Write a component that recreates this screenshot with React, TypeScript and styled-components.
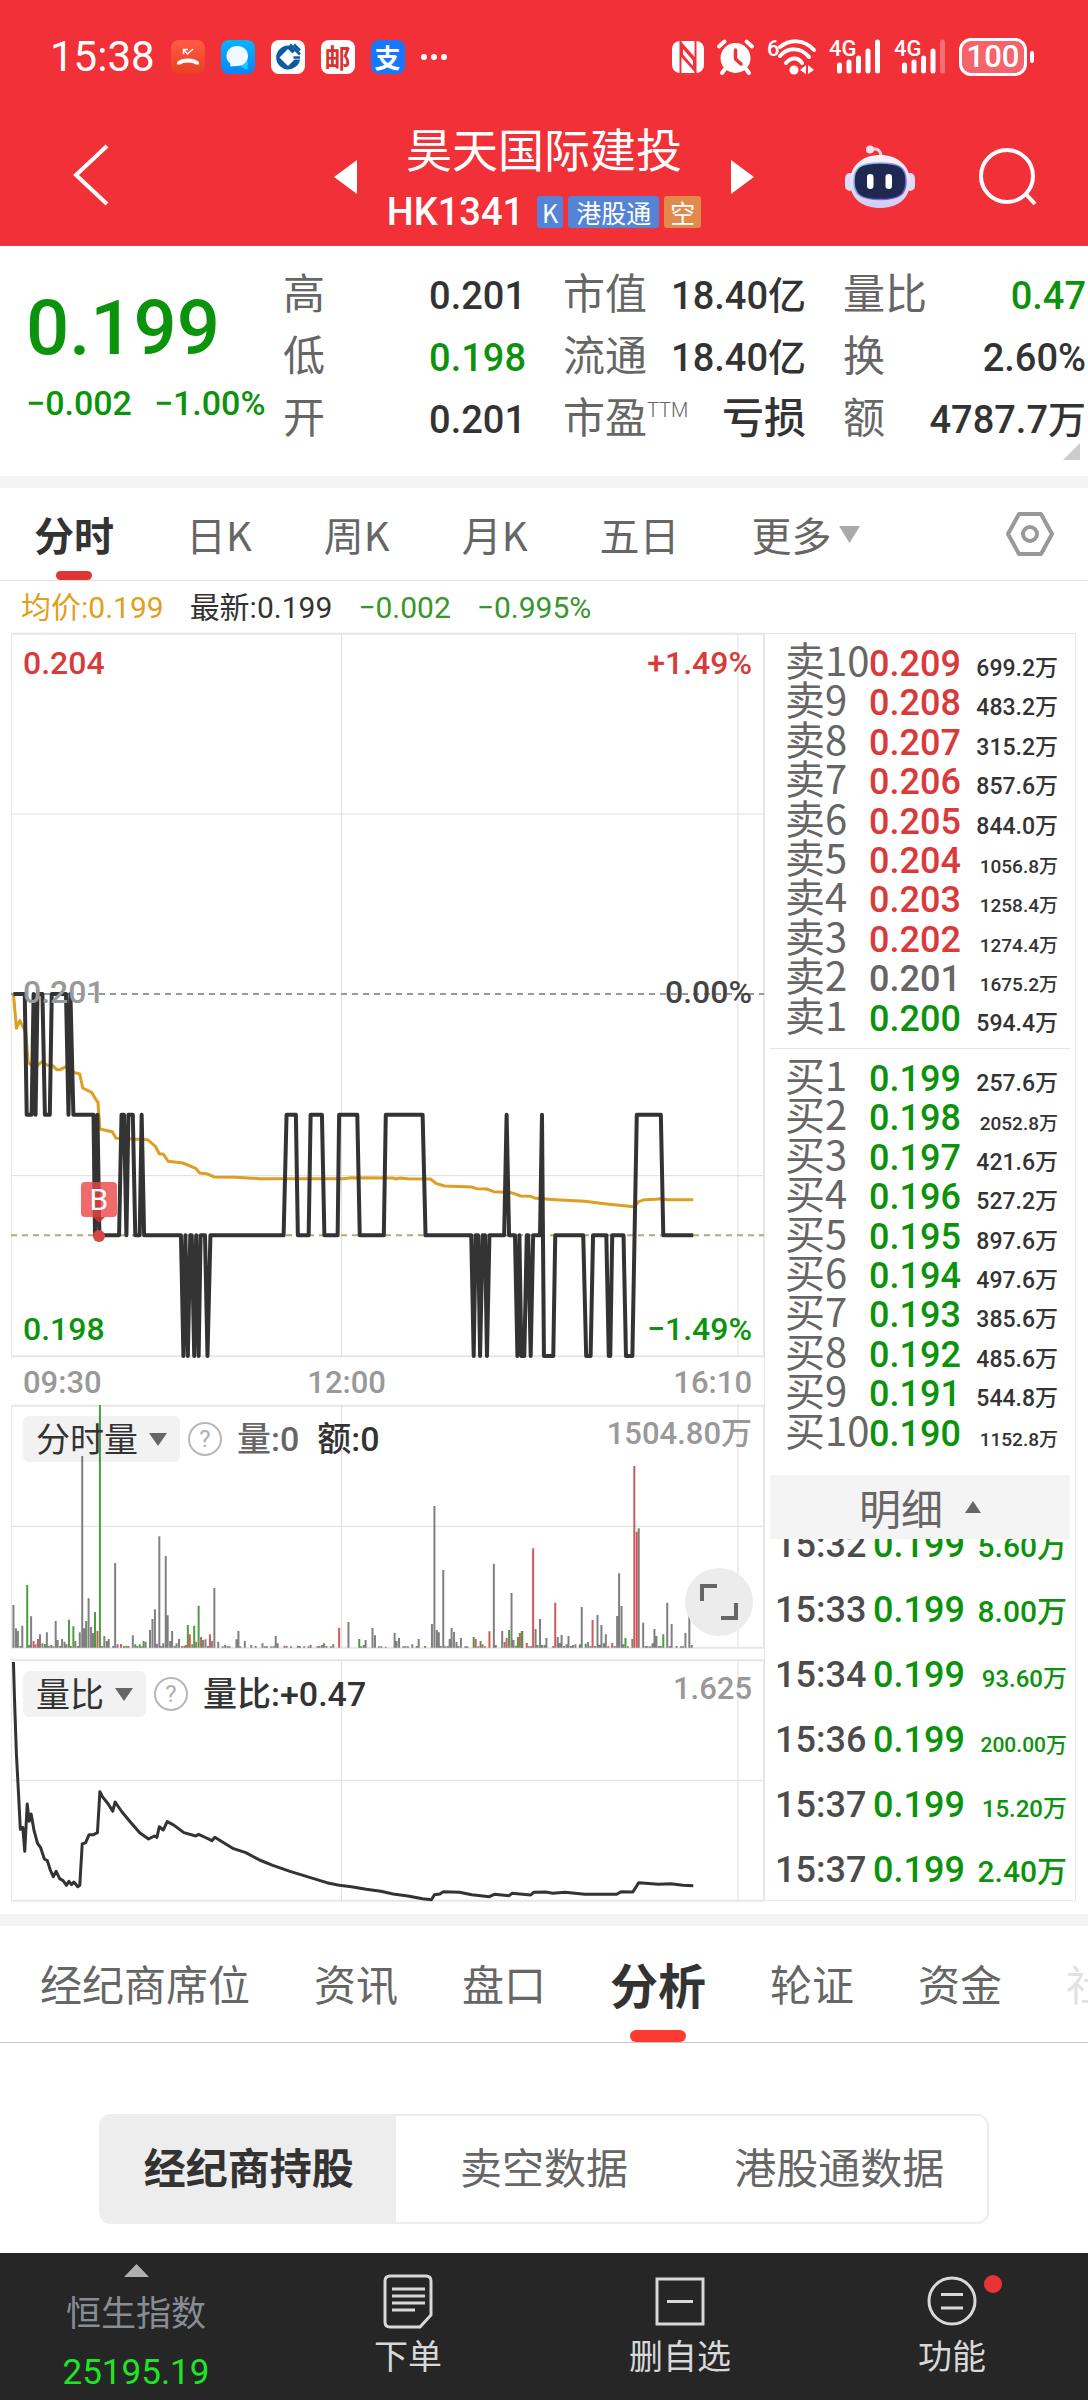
import React from "react";
import styled, { createGlobalStyle } from "styled-components";

const RED = "#d93a3a";
const GREEN = "#0c930c";
const INK = "#333333";
const GREY = "#666666";
const MUTED = "#999999";
const NUM = `Roboto, "Noto Sans CJK SC", sans-serif`;
const CJK = `"Noto Sans CJK SC", sans-serif`;

const GlobalStyle = createGlobalStyle`
  *, *::before, *::after { box-sizing: border-box; }
  body { margin: 0; background: #ffffff; font-family: ${CJK}; color: ${INK}; }
  button, select { font: inherit; color: inherit; background: none; border: 0; padding: 0; margin: 0; cursor: pointer; }
  svg { display: block; overflow: visible; }
  table { border-spacing: 0; }
  td, th { padding: 0; font-weight: inherit; text-align: left; }
`;

const Page = styled.div`
  display: flex;
  flex-direction: column;
  overflow: hidden;
`;

/* ---------- top bar ---------- */

const Top = styled.header`
  background: #f13038;
  color: #ffffff;
  border-bottom: 1px solid #d0484c;
`;

const StatusBar = styled.div`
  display: flex;
  justify-content: space-between;
  align-items: center;
  height: 112px;
  padding: 2px 54px 0 50px;
`;

const StatusGroup = styled.div<{ $gap: number }>`
  display: flex;
  align-items: center;
  gap: ${(p) => p.$gap}px;
`;

const Clock = styled.time`
  font: 400 42px/48px ${NUM};
`;

const AppIcon = styled.span<{ $bg: string; $fg?: string }>`
  display: flex;
  align-items: center;
  justify-content: center;
  width: 34px;
  height: 34px;
  border-radius: 8px;
  background: ${(p) => p.$bg};
  color: ${(p) => p.$fg || "#ffffff"};
  font: 700 26px/34px ${CJK};
`;

const Battery = styled.span`
  display: flex;
  align-items: center;
  gap: 3px;
  &::after {
    content: "";
    width: 4px;
    height: 12px;
    border-radius: 2px;
    background: #ffffff;
  }
`;

const BatteryBody = styled.span`
  display: flex;
  align-items: center;
  justify-content: center;
  width: 68px;
  height: 38px;
  border: 3px solid #ffffff;
  border-radius: 12px;
  background: rgba(255, 255, 255, 0.25);
  font: 500 31px/32px ${NUM};
`;

const TitleBar = styled.div`
  display: grid;
  grid-template-columns: 1fr auto 1fr;
  align-items: center;
  padding: 10px 0 13px;
`;

const TitleLeft = styled.div`
  padding-left: 73px;
`;

const TitleRight = styled.div`
  display: flex;
  align-items: center;
  justify-content: flex-end;
  gap: 64px;
  padding-right: 51px;
`;

const TitleNav = styled.div`
  display: flex;
  align-items: center;
  gap: 30px;
`;

const TitleText = styled.div`
  display: flex;
  flex-direction: column;
  align-items: center;
  gap: 20px;
`;

const StockName = styled.h1`
  margin: 0;
  font: 400 46px/50px ${CJK};
`;

const StockCode = styled.div`
  display: flex;
  align-items: center;
  gap: 5px;
  font: 500 38px/40px ${NUM};
`;

const CodeText = styled.span`
  margin-right: 8px;
`;

const Tag = styled.span<{ $bg: string; $pad: number }>`
  height: 32px;
  padding: 0 ${(p) => p.$pad}px;
  border-radius: 3px;
  background: ${(p) => p.$bg};
  font: 400 25px/32px ${CJK};
`;

/* ---------- quote ---------- */

const Quote = styled.section`
  display: grid;
  grid-template-columns: 257px 1fr;
  position: relative;
  padding: 17px 2px 27px 26px;
`;

const PriceBlock = styled.div`
  display: flex;
  flex-direction: column;
  color: ${GREEN};
  padding-top: 20px;
`;

const Price = styled.strong`
  font: 500 76px/90px ${NUM};
`;

const Change = styled.div`
  display: flex;
  gap: 22px;
  margin-top: 8px;
  white-space: nowrap;
  font: 500 34px/44px ${NUM};
`;

const Stats = styled.dl`
  display: grid;
  grid-template-columns: repeat(3, 1fr);
  column-gap: 37px;
  margin: 0;
`;

const Stat = styled.div`
  display: flex;
  justify-content: space-between;
  align-items: baseline;
  height: 62px;
  white-space: nowrap;
`;

const StatName = styled.dt`
  font: 400 42px/56px ${CJK};
  color: ${GREY};
`;

const Sup = styled.sup`
  font: 300 20px/20px ${NUM};
  vertical-align: 16px;
`;

const StatValue = styled.dd<{ $down?: boolean; $large?: boolean }>`
  margin: 0;
  font: 500 ${(p) => (p.$large ? 42 : 38)}px/56px ${NUM};
  color: ${(p) => (p.$down ? GREEN : INK)};
`;

const Corner = styled.span`
  position: absolute;
  right: 8px;
  bottom: 16px;
  border-left: 17px solid transparent;
  border-bottom: 17px solid #cccccc;
`;

const Band = styled.div`
  height: 12px;
  background: #f4f4f4;
`;

/* ---------- period tabs ---------- */

const PeriodTabs = styled.nav`
  display: flex;
  align-items: center;
  gap: 72px;
  height: 93px;
  padding: 0 34px;
  border-bottom: 1px solid #e4e4e4;
`;

const PeriodTab = styled.button<{ $on?: boolean }>`
  display: flex;
  align-items: center;
  gap: 7px;
  position: relative;
  height: 92px;
  font: ${(p) => (p.$on ? 700 : 400)} 40px/92px ${CJK};
  color: ${(p) => (p.$on ? INK : GREY)};
  white-space: nowrap;
  ${(p) =>
    p.$on &&
    `&::after {
      content: "";
      position: absolute;
      left: 50%;
      bottom: 0;
      width: 36px;
      height: 9px;
      margin-left: -18px;
      border-radius: 5px;
      background: #e33434;
    }`}
`;

const SettingsButton = styled.button`
  margin-left: auto;
`;

const Legend = styled.div`
  display: flex;
  align-items: center;
  gap: 26px;
  height: 52px;
  padding: 2px 0 0 21px;
  font: 400 30px/50px ${NUM};
`;

const LegendItem = styled.span<{ $color: string }>`
  color: ${(p) => p.$color};
`;

/* ---------- charts ---------- */

const Market = styled.section`
  display: grid;
  grid-template-columns: 1fr 312px;
  padding: 0 12px 13px 11px;
`;

const Charts = styled.div`
  display: flex;
  flex-direction: column;
`;

const Panel = styled.div<{ $h: number }>`
  position: relative;
  height: ${(p) => p.$h}px;
  & > svg {
    width: 100%;
    height: 100%;
  }
  & > svg * {
    vector-effect: non-scaling-stroke;
  }
`;

const AxisLabel = styled.span<{ $side: "left" | "right"; $top: number; $color: string }>`
  position: absolute;
  ${(p) => p.$side}: 12px;
  top: ${(p) => p.$top}px;
  font: 500 32px/40px ${NUM};
  color: ${(p) => p.$color};
`;

const TimeAxis = styled.div`
  display: grid;
  grid-template-columns: 39% 1fr auto;
  height: 48px;
  padding: 0 12px;
  font: 500 31px/52px ${NUM};
  color: ${MUTED};
`;

const PanelHead = styled.div`
  position: absolute;
  left: 12px;
  right: 12px;
  top: 11px;
  display: flex;
  align-items: center;
  height: 46px;
  font: 400 34px/46px ${NUM};
`;

const Picker = styled.label`
  display: flex;
  align-items: center;
  position: relative;
  & > svg {
    position: absolute;
    right: 13px;
    pointer-events: none;
  }
`;

const PickerSelect = styled.select`
  appearance: none;
  height: 46px;
  padding: 0 42px 2px 13px;
  border-radius: 6px;
  background: rgba(0, 0, 0, 0.05);
  font: 400 34px/44px ${CJK};
`;

const HelpButton = styled.button`
  width: 34px;
  height: 34px;
  margin: 0 15px 0 8px;
  border: 2px solid #b8b8b8;
  border-radius: 50%;
  color: #b0b0b0;
  font: 400 24px/30px ${NUM};
`;

const Reading = styled.span<{ $color: string }>`
  margin-right: 18px;
  font-weight: 500;
  color: ${(p) => p.$color};
`;

const ScaleMax = styled.span`
  margin-left: auto;
  font: 500 31px/36px ${NUM};
  align-self: flex-start;
  color: ${MUTED};
`;

const BuyMark = styled.span`
  position: absolute;
  left: 9%;
  top: 549px;
  width: 36px;
  height: 35px;
  margin-left: 2px;
  border-radius: 4px;
  background: rgba(235, 70, 70, 0.8);
  color: #ffffff;
  font: 400 30px/35px ${NUM};
  text-align: center;
  &::before {
    content: "";
    position: absolute;
    left: 12px;
    top: 35px;
    border: 6px solid transparent;
    border-top-color: rgba(200, 50, 50, 0.9);
    border-bottom: 0;
  }
  &::after {
    content: "";
    position: absolute;
    left: 12px;
    top: 48px;
    width: 12px;
    height: 12px;
    border-radius: 50%;
    background: #d94444;
  }
`;

const ExpandButton = styled.button`
  position: absolute;
  right: 11px;
  bottom: 12px;
  display: flex;
  align-items: center;
  justify-content: center;
  width: 68px;
  height: 68px;
  border-radius: 50%;
  background: #ececec;
`;

const Spacer = styled.div`
  height: 12px;
`;

/* ---------- order book ---------- */

const Book = styled.aside`
  display: flex;
  flex-direction: column;
  border: 1px solid #e6e6e6;
  padding: 0 5px;
`;

const Depth = styled.table`
  display: block;
  height: 414px;
  padding: 6px 12px 14px 15px;
`;

const DepthBody = styled.tbody`
  display: grid;
  grid-template-rows: repeat(10, minmax(0, 1fr));
  height: 394px;
`;

const DepthRow = styled.tr`
  display: grid;
  grid-template-columns: 84px 92px 1fr;
  align-items: baseline;
  line-height: 39px;
  white-space: nowrap;
`;

const DepthName = styled.th`
  font: 400 40px/39px ${CJK};
  color: ${GREY};
`;

const PriceCell = styled.td<{ $color: string }>`
  font-family: ${NUM};
  font-size: 36px;
  font-weight: 500;
  color: ${(p) => p.$color};
`;

const AmountCell = styled.td<{ $size: number; $color: string }>`
  && {
    text-align: right;
  }
  font-family: ${NUM};
  font-size: ${(p) => p.$size}px;
  font-weight: 500;
  color: ${(p) => p.$color};
`;

const Divider = styled.hr`
  width: 100%;
  height: 1px;
  margin: 0;
  border: 0;
  background: #e4e4e4;
`;

const DetailButton = styled.button`
  display: flex;
  align-items: center;
  justify-content: center;
  gap: 22px;
  height: 64px;
  margin-top: 12px;
  background: #f4f4f4;
  font: 400 42px/64px ${CJK};
  color: ${GREY};
`;

const Trades = styled.div`
  display: flex;
  flex-direction: column;
  justify-content: flex-end;
  height: 361px;
  padding: 0 3px 0 5px;
  overflow: hidden;
`;

const TradeRow = styled.tr`
  display: grid;
  grid-template-columns: 98px 92px 1fr;
  align-items: baseline;
  height: 65px;
  padding-top: 6px;
  line-height: 59px;
  white-space: nowrap;
`;

const TradeTime = styled.td`
  font-family: ${NUM};
  font-size: 36px;
  font-weight: 500;
  color: #4c4c4c;
`;

const TradeTable = styled.table`
  display: block;
  & > tbody {
    display: block;
  }
`;

/* ---------- info tabs ---------- */

const InfoTabs = styled.nav`
  display: flex;
  align-items: center;
  gap: 64px;
  height: 117px;
  padding-left: 40px;
  border-bottom: 1px solid #c6c6c6;
  overflow: hidden;
`;

const InfoTab = styled.button<{ $on?: boolean; $faded?: boolean }>`
  position: relative;
  flex: none;
  height: 116px;
  padding-bottom: 2px;
  font: ${(p) => (p.$on ? "700 48px" : "400 42px")}/114px ${CJK};
  color: ${(p) => (p.$on ? INK : p.$faded ? "#e2e2e2" : GREY)};
  ${(p) =>
    p.$on &&
    `&::after {
      content: "";
      position: absolute;
      left: 50%;
      bottom: 0;
      width: 56px;
      height: 12px;
      margin-left: -28px;
      border-radius: 6px;
      background: #fc3a30;
    }`}
`;

const Analysis = styled.section`
  padding: 71px 99px 29px;
`;

const Segments = styled.div`
  display: grid;
  grid-template-columns: repeat(3, 1fr);
  border: 2px solid #ededed;
  border-radius: 12px;
  overflow: hidden;
`;

const Segment = styled.button<{ $on?: boolean }>`
  height: 106px;
  padding-bottom: 6px;
  background: ${(p) => (p.$on ? "#ededed" : "#ffffff")};
  font: ${(p) => (p.$on ? 700 : 400)} 42px/100px ${CJK};
  color: ${(p) => (p.$on ? INK : GREY)};
`;

/* ---------- bottom bar ---------- */

const BottomBar = styled.footer`
  display: grid;
  grid-template-columns: repeat(4, 1fr);
  height: 147px;
  background: #262626;
  color: #d8d8d8;
`;

const IndexButton = styled.button`
  display: flex;
  flex-direction: column;
  align-items: center;
  padding-top: 11px;
`;

const IndexName = styled.span`
  margin-top: 9px;
  font: 400 35px/50px ${CJK};
  color: #878d93;
`;

const IndexValue = styled.span`
  margin-top: 15px;
  font: 400 35px/44px ${NUM};
  color: #1fe526;
`;

const BarButton = styled.button`
  display: flex;
  flex-direction: column;
  align-items: center;
  gap: 3px;
  padding-top: 20px;
  font: 400 34px/46px ${CJK};
`;

const IconSlot = styled.span`
  position: relative;
  display: flex;
`;

const Dot = styled.span`
  position: absolute;
  right: -25px;
  top: 2px;
  width: 18px;
  height: 18px;
  border-radius: 50%;
  background: #ea3434;
`;

/* ---------- data ---------- */

type Pt = [number, number];

// [x, price step below 0.201]
const priceSteps: Pt[] = [
  [27, 0], [50, 0], [54, 1], [64, 1], [68, 0], [72, 1], [76, 0], [86, 0], [91, 1], [101, 1], [105, 0], [134, 0],
  [139, 1], [143, 0], [149, 1], [190, 1], [193, 2], [198, 1], [202, 2], [242, 2], [247, 1], [252, 1], [257, 2],
  [261, 1], [270, 1], [275, 2], [284, 2], [288, 1], [293, 2], [368, 2], [373, 3], [377, 2], [382, 3], [387, 2],
  [390, 2], [395, 3], [399, 2], [404, 3], [408, 2], [417, 2], [422, 3], [428, 2], [577, 2], [583, 1], [602, 1],
  [606, 2], [628, 2], [632, 1], [655, 1], [660, 2], [687, 2], [690, 1], [727, 1], [732, 2], [781, 2], [785, 1],
  [860, 1], [866, 2], [959, 2], [964, 3], [968, 2], [973, 2], [977, 3], [982, 2], [987, 2], [991, 3], [996, 2],
  [1026, 2], [1031, 1], [1036, 2], [1048, 2], [1053, 3], [1057, 2], [1061, 3], [1067, 3], [1072, 2], [1075, 2],
  [1080, 3], [1085, 2], [1099, 2], [1103, 1], [1107, 3], [1126, 3], [1130, 2], [1187, 2], [1193, 3], [1202, 3],
  [1207, 2], [1234, 2], [1239, 3], [1242, 3], [1246, 2], [1269, 2], [1274, 3], [1287, 3], [1296, 1], [1345, 1],
  [1350, 2], [1411, 2],
];

const average: Pt[] = [
  [27, 45], [33, 148], [40, 125], [48, 148], [52, 160], [57, 250], [66, 262], [74, 262], [85, 248], [95, 258],
  [107, 260], [115, 272], [122, 272], [135, 262], [150, 280], [162, 285], [168, 327], [186, 340], [192, 355],
  [199, 370], [203, 450], [228, 458], [236, 478], [300, 482], [316, 502], [324, 525], [332, 525], [342, 547],
  [372, 552], [398, 568], [406, 582], [420, 584], [436, 594], [480, 595], [530, 599], [700, 599], [715, 596],
  [800, 597], [805, 600], [815, 597], [830, 599], [876, 600], [888, 614], [905, 621], [960, 624], [970, 629],
  [990, 630], [1005, 638], [1040, 641], [1060, 651], [1080, 652], [1090, 658], [1130, 662], [1190, 667],
  [1230, 674], [1270, 680], [1290, 683], [1300, 668], [1312, 662], [1335, 661], [1345, 659], [1360, 662],
  [1411, 662],
];

const ratio: Pt[] = [
  [27, 814], [29, 920], [33, 1090], [37, 1200], [41, 1316], [46, 1310], [50, 1382], [55, 1240], [59, 1292],
  [63, 1270], [69, 1320], [76, 1358], [82, 1370], [90, 1405], [96, 1410], [102, 1438], [108, 1458], [114, 1442],
  [121, 1464], [128, 1470], [135, 1484], [140, 1472], [145, 1482], [150, 1474], [158, 1488], [162, 1484],
  [167, 1360], [174, 1356], [181, 1332], [190, 1332], [198, 1326], [203, 1203], [208, 1218], [220, 1240],
  [229, 1262], [234, 1234], [248, 1264], [265, 1294], [284, 1326], [302, 1345], [314, 1336], [319, 1340],
  [324, 1308], [332, 1318], [340, 1293], [352, 1302], [374, 1326], [398, 1336], [404, 1331], [420, 1342],
  [431, 1350], [437, 1340], [455, 1356], [475, 1374], [500, 1386], [528, 1408], [555, 1424], [590, 1442],
  [630, 1460], [665, 1476], [690, 1484], [715, 1488], [745, 1496], [775, 1502], [800, 1510], [830, 1516],
  [860, 1524], [878, 1527], [884, 1512], [895, 1510], [902, 1503], [935, 1505], [960, 1512], [996, 1518],
  [1006, 1511], [1036, 1515], [1042, 1508], [1080, 1513], [1086, 1505], [1110, 1504], [1125, 1508], [1150, 1505],
  [1190, 1511], [1255, 1511], [1264, 1503], [1288, 1504], [1300, 1476], [1340, 1481], [1365, 1479], [1390, 1484],
  [1411, 1485],
];

const flatBars: Pt[] = [
  [27, 642], [32, 712], [36, 720], [41, 765], [45, 704], [59, 762], [63, 676], [72, 760], [81, 730], [86, 757],
  [95, 724], [99, 765], [108, 766], [113, 690], [117, 747], [122, 765], [126, 744], [131, 752], [135, 760],
  [153, 750], [158, 765], [162, 724], [167, 195], [171, 712], [175, 690], [180, 622], [185, 708], [189, 726],
  [207, 765], [212, 735], [217, 750], [221, 744], [230, 765], [234, 516], [239, 760], [252, 765], [270, 733],
  [279, 765], [284, 760], [288, 766], [296, 752], [305, 717], [310, 684], [315, 655], [319, 758], [324, 436],
  [328, 765], [332, 757], [337, 495], [341, 673], [346, 750], [350, 720], [355, 765], [359, 757], [364, 744],
  [370, 765], [375, 765], [391, 760], [399, 752], [413, 747], [418, 745], [423, 765], [431, 750], [436, 591],
  [444, 752], [453, 766], [458, 762], [463, 766], [467, 766], [481, 745], [485, 720], [489, 766], [498, 750],
  [511, 762], [520, 765], [534, 757], [539, 766], [543, 766], [552, 766], [557, 766], [561, 735], [565, 757],
  [579, 764], [592, 766], [610, 765], [619, 766], [628, 766], [646, 766], [650, 765], [655, 762], [664, 765],
  [673, 766], [678, 760], [709, 693], [735, 766], [740, 762], [744, 747], [758, 711], [763, 733], [771, 766],
  [776, 766], [803, 725], [807, 750], [812, 741], [821, 766], [825, 766], [830, 766], [839, 760], [848, 765],
  [852, 744], [879, 699], [884, 345], [889, 717], [893, 724], [897, 765], [902, 537], [906, 766], [911, 766],
  [915, 744], [919, 711], [924, 723], [929, 753], [933, 766], [938, 741], [947, 766], [951, 766], [973, 766],
  [987, 766], [1005, 518], [1009, 762], [1022, 720], [1027, 753], [1041, 606], [1045, 747], [1050, 764],
  [1063, 720], [1076, 766], [1081, 765], [1090, 714], [1094, 762], [1099, 684], [1108, 762], [1112, 741],
  [1126, 765], [1135, 738], [1139, 756], [1143, 732], [1148, 765], [1153, 760], [1157, 735], [1162, 765],
  [1166, 762], [1171, 760], [1180, 760], [1184, 648], [1197, 753], [1202, 765], [1211, 765], [1216, 672],
  [1220, 762], [1224, 702], [1229, 757], [1233, 730], [1238, 765], [1251, 765], [1256, 675], [1260, 547],
  [1265, 645], [1269, 760], [1278, 766], [1287, 744], [1300, 412], [1309, 695], [1314, 765], [1318, 766],
  [1323, 766], [1328, 757], [1332, 714], [1336, 735], [1341, 765], [1345, 765], [1358, 635], [1363, 765],
  [1367, 699], [1377, 765], [1386, 766], [1390, 766], [1395, 726], [1403, 672], [1408, 762],
];
const downBars: Pt[] = [
  [55, 582], [91, 759], [140, 686], [149, 706], [193, 663], [203, 42], [257, 764], [275, 760], [292, 750],
  [382, 702], [395, 704], [404, 644], [606, 764], [659, 757], [731, 744], [865, 765], [964, 738], [978, 750],
  [1036, 717], [1054, 738], [1062, 720], [1103, 762], [1192, 758], [1273, 741], [1350, 730],
];
const upBars: Pt[] = [
  [68, 750], [77, 744], [104, 762], [144, 765], [198, 720], [246, 759], [261, 765], [378, 762], [386, 730],
  [409, 738], [427, 730], [583, 765], [632, 762], [690, 710], [785, 767], [968, 744], [982, 760], [996, 721],
  [1031, 741], [1058, 726], [1072, 756], [1085, 472], [1130, 635], [1206, 687], [1246, 756], [1291, 225],
  [1296, 422],
];

const FLAT = 1083;
const STEP = 362;
const AVERAGE_TOP = 1038;
const VOLUME_BASE = 770;

const points = (list: Pt[]) => list.map((p) => p.join(",")).join(" ");
const barPath = (list: Pt[]) => list.map(([x, y]) => `M${x} ${VOLUME_BASE}V${y}`).join("");

const stats: { name: string; sup?: string; value: string; down?: boolean; large?: boolean }[] = [
  { name: "高", value: "0.201" },
  { name: "市值", value: "18.40亿" },
  { name: "量比", value: "0.47", down: true },
  { name: "低", value: "0.198", down: true },
  { name: "流通", value: "18.40亿" },
  { name: "换", value: "2.60%" },
  { name: "开", value: "0.201" },
  { name: "市盈", sup: "TTM", value: "亏损", large: true },
  { name: "额", value: "4787.7万" },
];

type Level = [string, string, string];
const asks: Level[] = [
  ["卖10", "0.209", "699.2万"], ["卖9", "0.208", "483.2万"], ["卖8", "0.207", "315.2万"],
  ["卖7", "0.206", "857.6万"], ["卖6", "0.205", "844.0万"], ["卖5", "0.204", "1056.8万"],
  ["卖4", "0.203", "1258.4万"], ["卖3", "0.202", "1274.4万"], ["卖2", "0.201", "1675.2万"],
  ["卖1", "0.200", "594.4万"],
];
const bids: Level[] = [
  ["买1", "0.199", "257.6万"], ["买2", "0.198", "2052.8万"], ["买3", "0.197", "421.6万"],
  ["买4", "0.196", "527.2万"], ["买5", "0.195", "897.6万"], ["买6", "0.194", "497.6万"],
  ["买7", "0.193", "385.6万"], ["买8", "0.192", "485.6万"], ["买9", "0.191", "544.8万"],
  ["买10", "0.190", "1152.8万"],
];
const trades: Level[] = [
  ["15:32", "0.199", "5.60万"], ["15:33", "0.199", "8.00万"], ["15:34", "0.199", "93.60万"],
  ["15:36", "0.199", "200.00万"], ["15:37", "0.199", "15.20万"], ["15:37", "0.199", "2.40万"],
];

const PREV_CLOSE = 0.201;
const levelColor = (price: string) => {
  const v = Number(price);
  return v > PREV_CLOSE ? RED : v < PREV_CLOSE ? GREEN : GREY;
};
const tradeSize = (amount: string) => (amount.length > 6 ? 21 : amount.length > 5 ? 24 : 30);

/* ---------- icons ---------- */

const Triangle = ({ w, h, d, fill }: { w: number; h: number; d: "up" | "down" | "left" | "right"; fill: string }) => {
  const shape = {
    up: `0,${h} ${w},${h} ${w / 2},0`,
    down: `0,0 ${w},0 ${w / 2},${h}`,
    left: `${w},0 ${w},${h} 0,${h / 2}`,
    right: `0,0 0,${h} ${w},${h / 2}`,
  }[d];
  return (
    <svg width={w} height={h} aria-hidden="true">
      <polygon points={shape} fill={fill} />
    </svg>
  );
};

const MissedCall = () => (
  <svg width="34" height="34" viewBox="0 0 34 34" fill="none" stroke="#fff">
    <path d="M12.500 14V9.500H17M12.500 9.500L16.500 14L22 9" strokeWidth="1.500" />
    <path d="M8 24.500V23C12 19.500 22 19.500 26 23V24.500" strokeWidth="4" strokeLinejoin="round" />
  </svg>
);

const Chat = () => (
  <svg width="34" height="34" viewBox="0 0 34 34">
    <path d="M24 20C28 21 28 25 26 26L27 29C22 29 19 27 20 23Z" fill="#17c8ff" />
    <path d="M16 6C23 6 27 10.500 27 16C27 21.500 23 26 16 26L9.500 26.500L9 23C6.500 21.500 5.500 19 5.500 16C5.500 10.500 9.500 6 16 6Z" fill="#eefaff" />
  </svg>
);

const Bank = () => (
  <svg width="34" height="34" viewBox="0 0 34 34">
    <path d="M17 5.500A12 12 0 1 0 29 19.500H23.500L17 26L8.500 17.500L17 9L21.500 13.500L24 11L19 6Z" fill="#0a5aa6" />
    <path d="M17 11.500L23 17.500L17 23.500L11 17.500Z" fill="#ffffff" />
    <path d="M19 4.500L29 14.500M23 4.500L29 10.500M22.500 17.500H29" stroke="#0a5aa6" strokeWidth="2.500" fill="none" />
  </svg>
);

const More = () => (
  <svg width="26" height="8" fill="#fff">
    <circle cx="3" cy="4" r="3" />
    <circle cx="13" cy="4" r="3" />
    <circle cx="23" cy="4" r="3" />
  </svg>
);

const Nfc = () => (
  <svg width="32" height="34" viewBox="0 0 32 34">
    <rect x="0" y="1" width="32" height="32" rx="8" fill="#fff" />
    <path d="M8.500 1V33M23.500 1V33" stroke="#f13038" strokeWidth="2" />
    <path d="M8.500 1L23.500 18V33L8.500 16Z" fill="#f13038" />
    <path d="M11 9L21 20.500V26L11 14.500Z" fill="#fff" />
  </svg>
);

const Alarm = () => (
  <svg width="37" height="36" viewBox="0 0 37 36" stroke="#fff" strokeLinecap="round">
    <circle cx="18.500" cy="19" r="15" fill="#fff" stroke="none" />
    <path d="M2 7.500L7.500 2.500M35 7.500L29.500 2.500M8 30L5 34M29 30L32 34" strokeWidth="4" fill="none" />
    <path d="M18.500 11V20L24 25" stroke="#f13038" strokeWidth="3.500" fill="none" />
  </svg>
);

const Wifi = () => (
  <svg width="49" height="38" viewBox="0 0 49 38" fill="none" stroke="#fff" strokeLinecap="round">
    <text x="0" y="18" fontSize="22" fontWeight="500" fontFamily="Roboto" fill="#fff" stroke="none">6</text>
    <path d="M13 9C23 1 37 1 47 12" strokeWidth="4" />
    <path d="M13 18C21 9 34 9 42 19" strokeWidth="4" />
    <path d="M19 25C24 19 31 19 35 25" strokeWidth="4" />
    <circle cx="27" cy="32" r="4.500" fill="#fff" stroke="none" />
    <path d="M39 27V36L33 32ZM41 27V36L47 32Z" fill="#fff" stroke="none" />
  </svg>
);

const Signal = ({ weak }: { weak?: boolean }) => (
  <svg width="52" height="36" viewBox="0 0 52 36" stroke="#fff" strokeWidth="5" strokeLinecap="round">
    <text x="0" y="17" fontSize="22" fontWeight="500" fontFamily="Roboto" fill="#fff" stroke="none">4G</text>
    <path d="M10.500 26V32M20 23V32M29.500 19V32M39 12V32" />
    <path d="M48.500 3V32" opacity={weak ? 0.3 : 1} />
  </svg>
);

const Robot = () => (
  <svg width="70" height="64" viewBox="0 0 70 64">
    <defs>
      <linearGradient id="shell" x1="0" y1="0" x2="0" y2="1">
        <stop offset="0" stopColor="#fff3f8" />
        <stop offset="1" stopColor="#cfcdf2" />
      </linearGradient>
      <linearGradient id="rim" x1="0" y1="0" x2="1" y2="1">
        <stop offset="0" stopColor="#7fd6e8" />
        <stop offset="1" stopColor="#7a3fe0" />
      </linearGradient>
    </defs>
    <path d="M26 4.500C32 3 36 5 36 12" stroke="#f6d5e2" strokeWidth="3" fill="none" />
    <circle cx="25" cy="4.500" r="4" fill="#fbdfe8" />
    <rect x="0" y="28" width="10" height="18" rx="5" fill="#dcdcf8" />
    <rect x="60" y="28" width="10" height="18" rx="5" fill="#dcdcf8" />
    <path d="M35 10C52 10 65 20 65 37C65 54 52 63 35 63C18 63 5 54 5 37C5 20 18 10 35 10Z" fill="url(#shell)" />
    <path d="M35 18C54 18 61 22 61 36C61 50 54 54.500 35 54.500C16 54.500 9 50 9 36C9 22 16 18 35 18Z" fill="#1f2850" stroke="url(#rim)" strokeWidth="1.500" />
    <rect x="22" y="29" width="6.500" height="15" rx="3.200" fill="#fff" />
    <rect x="40.500" y="29" width="6.500" height="15" rx="3.200" fill="#fff" />
  </svg>
);

const Grid = ({ top, height, mid }: { top: number; height: number; mid: number[] }) => (
  <g fill="none" stroke="#e6e6e6">
    <path d={`M22 ${top}H1555M22 ${top + height}H1555`} strokeWidth="2" />
    <path d={`M23 ${top}V${top + height}M1554 ${top}V${top + height}`} strokeWidth="1" />
    <path d={`M695 ${top}V${top + height}M1502 ${top}V${top + height}`} strokeWidth="1" stroke="#dedede" />
    {mid.map((y) => (
      <path key={y} d={`M22 ${y}H1555`} strokeWidth="1" stroke="#dedede" />
    ))}
  </g>
);

const DepthTable = ({ levels, label }: { levels: Level[]; label: string }) => (
  <Depth aria-label={label}>
    <DepthBody>
      {levels.map(([name, price, amount]) => (
        <DepthRow key={name}>
          <DepthName scope="row">{name}</DepthName>
          <PriceCell $color={levelColor(price)}>{price}</PriceCell>
          <AmountCell $size={amount.length > 6 ? 19 : 23} $color={INK}>{amount}</AmountCell>
        </DepthRow>
      ))}
    </DepthBody>
  </Depth>
);

export default function App() {
  return (
    <Page>
      <GlobalStyle />
      <Top>
        <StatusBar>
          <StatusGroup $gap={16}>
            <Clock>15:38</Clock>
            <AppIcon $bg="linear-gradient(#ff5a45, #ea4022)"><MissedCall /></AppIcon>
            <AppIcon $bg="linear-gradient(#05b4ff, #0684ff)"><Chat /></AppIcon>
            <AppIcon $bg="#ffffff"><Bank /></AppIcon>
            <AppIcon $bg="#ffffff" $fg="#d8342f">邮</AppIcon>
            <AppIcon $bg="#1677ff">支</AppIcon>
            <More />
          </StatusGroup>
          <StatusGroup $gap={13}>
            <Nfc />
            <Alarm />
            <Wifi />
            <Signal />
            <Signal weak />
            <Battery><BatteryBody>100</BatteryBody></Battery>
          </StatusGroup>
        </StatusBar>
        <TitleBar>
          <TitleLeft>
            <button aria-label="返回">
              <svg width="36" height="62" fill="none" stroke="#fff" strokeWidth="4">
                <path d="M34 2L3 31L34 60" />
              </svg>
            </button>
          </TitleLeft>
          <TitleNav>
            <button aria-label="上一只"><Triangle w={23} h={34} d="left" fill="#fff" /></button>
            <TitleText>
              <StockName>昊天国际建投</StockName>
              <StockCode>
                <CodeText>HK1341</CodeText>
                <Tag $bg="#5484d8" $pad={5}>K</Tag>
                <Tag $bg="#5484d8" $pad={8}>港股通</Tag>
                <Tag $bg="#e08a4c" $pad={6}>空</Tag>
              </StockCode>
            </TitleText>
            <button aria-label="下一只"><Triangle w={23} h={34} d="right" fill="#fff" /></button>
          </TitleNav>
          <TitleRight>
            <button aria-label="智能助手"><Robot /></button>
            <button aria-label="搜索">
              <svg width="58" height="58" fill="none" stroke="#fff" strokeWidth="4">
                <circle cx="28" cy="28" r="26" />
                <path d="M46 45L56 56" />
              </svg>
            </button>
          </TitleRight>
        </TitleBar>
      </Top>

      <Quote>
        <PriceBlock>
          <Price>0.199</Price>
          <Change>
            <span>−0.002</span>
            <span>−1.00%</span>
          </Change>
        </PriceBlock>
        <Stats>
          {stats.map((s) => (
            <Stat key={s.name}>
              <StatName>
                {s.name}
                {s.sup && <Sup>{s.sup}</Sup>}
              </StatName>
              <StatValue $down={s.down} $large={s.large}>{s.value}</StatValue>
            </Stat>
          ))}
        </Stats>
        <Corner />
      </Quote>
      <Band />

      <PeriodTabs>
        <PeriodTab $on>分时</PeriodTab>
        <PeriodTab>日K</PeriodTab>
        <PeriodTab>周K</PeriodTab>
        <PeriodTab>月K</PeriodTab>
        <PeriodTab>五日</PeriodTab>
        <PeriodTab>
          更多
          <Triangle w={21} h={17} d="down" fill="#aaaaaa" />
        </PeriodTab>
        <SettingsButton aria-label="设置">
          <svg width="48" height="44" viewBox="0 0 48 44" fill="none" stroke="#999" strokeWidth="4" strokeLinejoin="round">
            <path d="M13 2H35L46 22L35 42H13L2 22Z" />
            <circle cx="24" cy="22" r="7" />
          </svg>
        </SettingsButton>
      </PeriodTabs>

      <Legend>
        <LegendItem $color="#e0a01e">均价:0.199</LegendItem>
        <LegendItem $color={INK}>最新:0.199</LegendItem>
        <LegendItem $color="#37962c">−0.002</LegendItem>
        <LegendItem $color="#37962c">−0.995%</LegendItem>
      </Legend>

      <Market>
        <Charts>
          <Panel $h={724}>
            <svg viewBox="22 0 1533 2172" preserveAspectRatio="none">
              <Grid top={2} height={2168} mid={[543, 1628]} />
              <g fill="none" strokeLinejoin="round">
                <path d={`M22 ${FLAT}H1555`} stroke="#999" strokeWidth="2" strokeDasharray="6 5" />
                <path d={`M22 ${FLAT + 2 * STEP}H1555`} stroke="#b5a67c" strokeWidth="2" strokeDasharray="6 5" />
                <polyline points={points(average.map(([x, y]) => [x, y + AVERAGE_TOP]))} stroke="#dd9f22" strokeWidth="3" />
                <polyline points={points(priceSteps.map(([x, s]) => [x, FLAT + s * STEP]))} stroke="#333" strokeWidth="4" />
              </g>
            </svg>
            <AxisLabel $side="left" $top={10} $color={RED}>0.204</AxisLabel>
            <AxisLabel $side="right" $top={10} $color={RED}>+1.49%</AxisLabel>
            <AxisLabel $side="left" $top={339} $color={MUTED}>0.201</AxisLabel>
            <AxisLabel $side="right" $top={339} $color="#444444">0.00%</AxisLabel>
            <AxisLabel $side="left" $top={676} $color={GREEN}>0.198</AxisLabel>
            <AxisLabel $side="right" $top={676} $color={GREEN}>−1.49%</AxisLabel>
            <BuyMark>B</BuyMark>
          </Panel>
          <TimeAxis>
            <span>09:30</span>
            <span>12:00</span>
            <span>16:10</span>
          </TimeAxis>
          <Panel $h={243}>
            <svg viewBox="22 42 1533 729" preserveAspectRatio="none">
              <Grid top={44} height={726} mid={[406]} />
              <g fill="none" strokeWidth="2">
                <path d={barPath(flatBars)} stroke="#808080" />
                <path d={barPath(downBars)} stroke="#4d9c42" />
                <path d={barPath(upBars)} stroke="#d05a5a" />
              </g>
            </svg>
            <PanelHead>
              <Picker>
                <PickerSelect aria-label="副图指标一"><option>分时量</option></PickerSelect>
                <Triangle w={18} h={13} d="down" fill="#666666" />
              </Picker>
              <HelpButton aria-label="成交量说明">?</HelpButton>
              <Reading $color={GREY}>量:0</Reading>
              <Reading $color={INK}>额:0</Reading>
              <ScaleMax>1504.80万</ScaleMax>
            </PanelHead>
            <ExpandButton aria-label="全屏">
              <svg width="38" height="36" fill="none" stroke="#666" strokeWidth="4">
                <path d="M2 17V2H17M36 19V34H21" />
              </svg>
            </ExpandButton>
          </Panel>
          <Spacer />
          <Panel $h={241}>
            <svg viewBox="22 808 1533 723" preserveAspectRatio="none">
              <Grid top={809} height={721} mid={[1169]} />
              <polyline points={points(ratio)} fill="none" stroke="#333" strokeWidth="3" strokeLinejoin="round" />
            </svg>
            <PanelHead>
              <Picker>
                <PickerSelect aria-label="副图指标二"><option>量比</option></PickerSelect>
                <Triangle w={18} h={13} d="down" fill="#666666" />
              </Picker>
              <HelpButton aria-label="量比说明">?</HelpButton>
              <Reading $color={INK}>量比:+0.47</Reading>
              <ScaleMax>1.625</ScaleMax>
            </PanelHead>
          </Panel>
        </Charts>

        <Book>
          <DepthTable levels={asks} label="卖盘" />
          <Divider />
          <DepthTable levels={bids} label="买盘" />
          <DetailButton>
            明细
            <Triangle w={16} h={12} d="up" fill="#666666" />
          </DetailButton>
          <Trades>
            <TradeTable aria-label="成交明细">
              <tbody>
                {trades.map(([time, price, amount], i) => (
                  <TradeRow key={i}>
                    <TradeTime>{time}</TradeTime>
                    <PriceCell $color={GREEN}>{price}</PriceCell>
                    <AmountCell $size={tradeSize(amount)} $color={GREEN}>{amount}</AmountCell>
                  </TradeRow>
                ))}
              </tbody>
            </TradeTable>
          </Trades>
        </Book>
      </Market>
      <Band />

      <InfoTabs>
        <InfoTab>经纪商席位</InfoTab>
        <InfoTab>资讯</InfoTab>
        <InfoTab>盘口</InfoTab>
        <InfoTab $on>分析</InfoTab>
        <InfoTab>轮证</InfoTab>
        <InfoTab>资金</InfoTab>
        <InfoTab $faded>社区</InfoTab>
      </InfoTabs>
      <Analysis>
        <Segments>
          <Segment $on>经纪商持股</Segment>
          <Segment>卖空数据</Segment>
          <Segment>港股通数据</Segment>
        </Segments>
      </Analysis>

      <BottomBar>
        <IndexButton>
          <Triangle w={25} h={13} d="up" fill="#b0b0b0" />
          <IndexName>恒生指数</IndexName>
          <IndexValue>25195.19</IndexValue>
        </IndexButton>
        <BarButton>
          <IconSlot>
            <svg width="50" height="56" viewBox="0 0 50 56" fill="none" stroke="#d8d8d8" strokeWidth="3">
              <path d="M7 3H43Q48 3 48 8V42L37 54H7Q2 54 2 49V8Q2 3 7 3Z" />
              <path d="M9 16H42M9 23H42M9 30H42M9 37H32" />
            </svg>
          </IconSlot>
          下单
        </BarButton>
        <BarButton>
          <IconSlot>
            <svg width="50" height="56" viewBox="0 0 50 56" fill="none" stroke="#d8d8d8" strokeWidth="3">
              <rect x="2" y="6" width="46" height="45" />
              <path d="M12 28.500H38" />
            </svg>
          </IconSlot>
          删自选
        </BarButton>
        <BarButton>
          <IconSlot>
            <svg width="50" height="56" viewBox="0 0 50 56" fill="none" stroke="#d8d8d8" strokeWidth="3">
              <circle cx="25" cy="28" r="23" />
              <path d="M14 21.500H36M14 35H36" />
            </svg>
            <Dot />
          </IconSlot>
          功能
        </BarButton>
      </BottomBar>
    </Page>
  );
}
